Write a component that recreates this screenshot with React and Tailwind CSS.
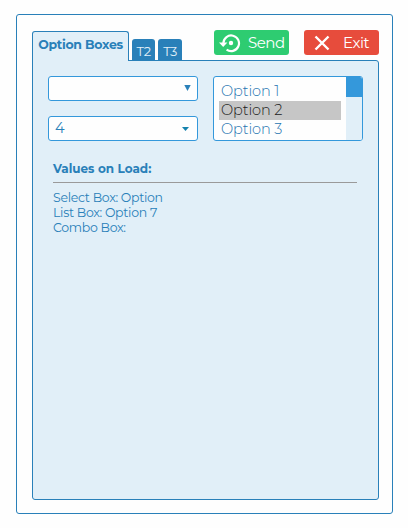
import { useState } from 'react';

const options = ['Option 1', 'Option 2', 'Option 3'];

function SendIcon() {
    return (
        <svg width="22" height="20" viewBox="0 0 22 20" fill="none" stroke="white">
            <path d="M4.4 11.2V10A7.8 7.8 0 1 1 7.6 16.6" strokeWidth="2.2" />
            <path d="M0 9.4H8.4L4.2 14Z" fill="white" stroke="none" />
            <circle cx="12" cy="10" r="2.2" fill="white" stroke="none" />
        </svg>
    );
}

function ExitIcon() {
    return (
        <svg width="16" height="16" viewBox="0 0 16 16" fill="none" stroke="white" strokeWidth="2.4">
            <path d="M1.5 1.5L14.5 14.5M14.5 1.5L1.5 14.5" />
        </svg>
    );
}

function App() {
    const [tab, setTab] = useState(0);
    const [selected, setSelected] = useState(1);

    return (
        <div className="h-[528px] w-[408px] bg-[#fefefe] pt-[14px] pl-4 font-['Montserrat','Inter',sans-serif] text-[#2980b9]">
            <div className="flex h-[500px] w-[377px] flex-col rounded-[3px] border border-[#2980b9] px-[15px] pt-[15px]">
                {/* Tabs and buttons */}
                <div className="flex h-[31px] w-[347px] items-start">
                    <button
                        onClick={() => setTab(0)}
                        className="z-10 mt-px h-[30px] w-[97px] rounded-t-[3px] border border-b-0 border-[#2980b9] bg-[#e1eff8] pb-1 text-[12.5px] leading-[25px] font-bold tracking-[-0.28px] whitespace-nowrap"
                    >
                        Option Boxes
                    </button>
                    <button onClick={() => setTab(1)} className="mt-[9px] ml-[3px] h-[22px] w-[23px] rounded-t-[3px] bg-[#2980b9] pt-[3px] text-[13px] leading-[19px] tracking-[-0.6px] text-[#e1eff8]">
                        T2
                    </button>
                    <button onClick={() => setTab(2)} className="mt-[9px] ml-[3px] h-[22px] w-6 rounded-t-[3px] bg-[#2980b9] pt-[3px] text-[13px] leading-[19px] tracking-[-0.6px] text-[#e1eff8]">
                        T3
                    </button>

                    <button className="ml-8 flex h-[25px] w-[75px] items-center rounded-[3px] bg-[#2ecc71] pl-[5px] text-[15px] leading-[25px] tracking-[-0.5px] text-white">
                        <SendIcon />
                        <span className="ml-[7px]">Send</span>
                    </button>
                    <button className="ml-[15px] flex h-[25px] w-[75px] items-center rounded-[3px] bg-[#e74c3c] pl-[10px] text-[15px] leading-[25px] tracking-[-0.4px] text-white">
                        <ExitIcon />
                        <span className="ml-[13px]">Exit</span>
                    </button>
                </div>

                {/* Tab panel */}
                <div className="-mt-px h-[440px] w-[347px] rounded-[3px] rounded-tl-none border border-[#2980b9] bg-[#e1eff8] px-[15px] pt-[15px]">
                    <div className="flex gap-[15px]">
                        <div className="flex flex-col gap-[15px]">
                            <div className="flex h-[25px] w-[150px] items-start justify-end rounded-[3px] border border-[#3498db] bg-[#fefefe] pt-2 pr-[6px]">
                                <svg width="7" height="6" viewBox="0 0 7 6" fill="#2980b9">
                                    <path d="M0.3 0H6.7L3.5 6Z" />
                                </svg>
                            </div>
                            <div className="flex h-[25px] w-[150px] items-center justify-between rounded-[3px] border border-[#3498db] bg-[#fefefe] pr-2 pl-[6px] text-[14.5px]">
                                <span className="pt-px">4</span>
                                <svg width="7" height="4" viewBox="0 0 7 4" fill="#1482ad">
                                    <path d="M0 0H7L3.5 4Z" />
                                </svg>
                            </div>
                        </div>

                        <div className="flex h-[65px] w-[150px] overflow-hidden rounded-[3px] border border-[#3498db] bg-[#fefefe]">
                            <ul className="w-[132px] pt-[5px] pr-[5px] pl-[5px]">
                                {options.map((option, i) => (
                                    <li
                                        key={option}
                                        onClick={() => setSelected(i)}
                                        className={`h-[19px] pl-[2px] text-[14.5px] leading-[19px] font-light tracking-[-0.1px] ${i === selected ? 'bg-[#c6c6c6] text-[#202020]' : 'text-[#1f74b0]'}`}
                                    >
                                        {option}
                                    </li>
                                ))}
                            </ul>
                            <div className="w-4 bg-[#e1eff8]">
                                <div className="h-5 bg-[#3498db]" />
                            </div>
                        </div>
                    </div>

                    {/* Loaded values */}
                    <div className="mt-[19px] ml-[5px] w-[304px] text-[12.5px] leading-[15px] tracking-[-0.28px]">
                        <h2 className="h-[22px] text-[12px] leading-[17px] font-bold tracking-normal">Values on Load:</h2>
                        <hr className="border-[#9a9a9a]" />
                        <div className="pt-[7px]">
                            <p>Select Box: Option</p>
                            <p>List Box: Option 7</p>
                            <p>Combo Box:</p>
                        </div>
                    </div>
                </div>
            </div>
        </div>
    );
}

export default App;
